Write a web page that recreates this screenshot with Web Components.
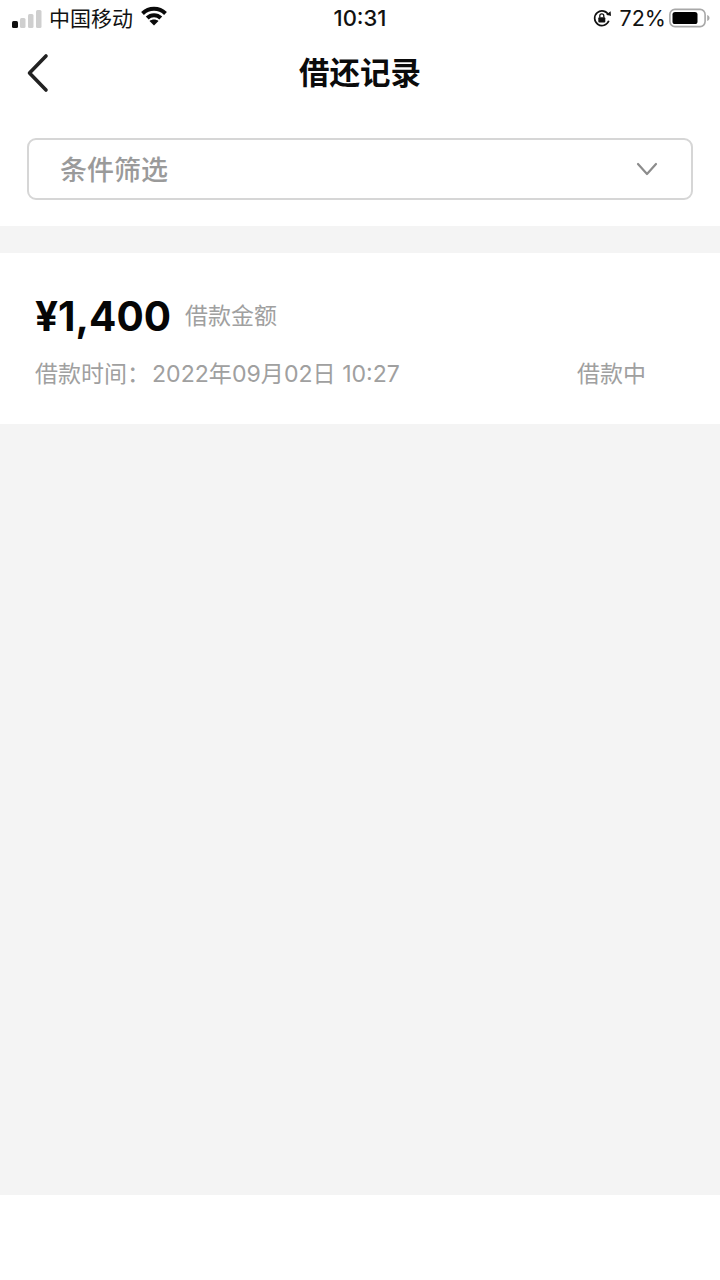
<!DOCTYPE html>
<html lang="zh">
<head>
<meta charset="utf-8">
<title>借还记录</title>
<style>
    html, body { margin: 0; padding: 0; background: #fff; }
    body { width: 720px; height: 1280px; overflow: hidden; font-family: Inter, "Noto Sans CJK SC", sans-serif; }
</style>
</head>
<body>
<record-page>
    <status-bar></status-bar>
    <nav-bar title="借还记录"></nav-bar>
    <filter-select label="条件筛选"></filter-select>
    <record-list>
        <loan-record amount="¥1,400" caption="借款金额" time="借款时间：" date="2022年09月02日 10:27" state="借款中"></loan-record>
    </record-list>
</record-page>
<script>
{
    class RecordPage extends HTMLElement {
        constructor() {
            super();
            this.attachShadow({ mode: "open" }).innerHTML = `
            <style>
                :host { display: block; height: 1280px; background: #fff; }
            </style>
            <slot></slot>
            `;
        }
    }

    class StatusBar extends HTMLElement {
        constructor() {
            super();
            this.attachShadow({ mode: "open" }).innerHTML = `
            <style>
                :host { display: grid; grid-template-columns: 1fr auto 1fr; align-items: center; height: 37px; font-size: 21px; color: #111; }
                #left, #right { display: flex; align-items: center; }
                #left { padding-left: 12px; }
                #right { justify-content: flex-end; padding-right: 10px; }
                #carrier { margin-left: 7px; margin-top: -3px; }
                #wifi { margin-left: 8px; margin-top: -5px; }
                #clock { font-size: 22px; font-weight: 500; margin-top: -1px; }
                #lock { margin-top: -1px; }
                #pct { margin: -2px 5px 0 8px; font-size: 21.500px; }
                #battery { margin-top: -1px; margin-left: -2px; }
                svg { display: block; }
            </style>
            <div id="left">
                <svg width="30" height="20" viewBox="0 0 30 20">
                    <rect x="0" y="12" width="6" height="7" rx="1.500" fill="#111"/>
                    <rect x="8" y="9" width="5.500" height="10" rx="1.500" fill="#cfcfcf"/>
                    <rect x="16" y="5" width="5.500" height="14" rx="1.500" fill="#cfcfcf"/>
                    <rect x="24" y="1" width="5.500" height="18" rx="1.500" fill="#cfcfcf"/>
                </svg>
                <span id="carrier">中国移动</span>
                <svg id="wifi" width="26" height="20" viewBox="0 0 26 20" fill="none" stroke="#0a0a0a" stroke-width="4">
                    <path d="M1.500 7.500C8 1.200 18 1.200 24.500 7.500"/>
                    <path d="M6.200 12C10 8.200 16 8.200 19.800 12"/>
                    <path d="M13 19.500L8.500 15C11 13 15 13 17.500 15Z" fill="#0a0a0a" stroke="none"/>
                </svg>
            </div>
            <span id="clock">10:31</span>
            <div id="right">
                <svg id="lock" width="20" height="20" viewBox="0 0 20 20" fill="none">
                    <path d="M16.600 7.200A7.300 7.300 0 1 0 16.800 12.800" stroke="#111" stroke-width="1.700"/>
                    <path d="M14.200 6.400L19 8L18.600 3.200Z" fill="#111"/>
                    <rect x="6.300" y="9.200" width="7" height="5.400" rx="1" fill="#111"/>
                    <path d="M7.800 9.500V7.800a2 2 0 0 1 4 0V9.500" stroke="#111" stroke-width="1.300"/>
                </svg>
                <span id="pct">72%</span>
                <svg id="battery" width="41" height="20" viewBox="0 0 41 20">
                    <rect x="0.900" y="1.400" width="35.200" height="17.200" rx="5" fill="none" stroke="#a8a8a8" stroke-width="1.600"/>
                    <rect x="3.500" y="4" width="25" height="12" rx="2.600" fill="#000"/>
                    <path d="M38.200 7v6c1.500-.6 2.300-1.800 2.300-3s-.8-2.400-2.300-3Z" fill="#a8a8a8"/>
                </svg>
            </div>
            `;
        }
    }

    class NavBar extends HTMLElement {
        constructor() {
            super();
            this.attachShadow({ mode: "open" }).innerHTML = `
            <style>
                :host { display: flex; justify-content: center; position: relative; height: 73px; }
                h1 { margin: 16px 0 0; font-size: 30.500px; line-height: 40px; font-weight: 700; color: #0b0b0b; }
                svg { position: absolute; left: 26px; top: 16px; }
            </style>
            <svg width="24" height="40" viewBox="0 0 24 40" fill="none" stroke="#222" stroke-width="3.600" stroke-linecap="round" stroke-linejoin="round">
                <path d="M20 3L3.500 20L20 37"/>
            </svg>
            <h1>${this.getAttribute("title")}</h1>
            `;
        }
    }

    class FilterSelect extends HTMLElement {
        constructor() {
            super();
            this.attachShadow({ mode: "open" }).innerHTML = `
            <style>
                :host { display: block; padding: 28px 27px 26px; }
                #box { display: flex; align-items: center; justify-content: space-between; height: 62px; box-sizing: border-box; padding: 0 33px 0 31px; border: 2px solid #d6d6d6; border-radius: 9px; }
                span { font-size: 27px; font-weight: 500; color: #9a9a9a; margin-top: -2px; }
                svg { display: block; }
            </style>
            <div id="box">
                <span>${this.getAttribute("label")}</span>
                <svg width="22" height="14" viewBox="0 0 22 14" fill="none" stroke="#8c8c8c" stroke-width="2.200" stroke-linecap="round" stroke-linejoin="round">
                    <path d="M2 2L11 12L20 2"/>
                </svg>
            </div>
            `;
        }
    }

    class RecordList extends HTMLElement {
        constructor() {
            super();
            this.attachShadow({ mode: "open" }).innerHTML = `
            <style>
                :host { display: block; height: 969px; box-sizing: border-box; padding-top: 27px; background: #f4f4f4; }
            </style>
            <slot></slot>
            `;
        }
    }

    class LoanRecord extends HTMLElement {
        constructor() {
            super();
            this.attachShadow({ mode: "open" }).innerHTML = `
            <style>
                :host { display: block; height: 171px; box-sizing: border-box; padding: 38px 35px 0; background: #fff; color: #a0a0a0; }
                #top { display: flex; align-items: center; height: 50px; }
                #amount { font-size: 40.500px; line-height: 50px; font-weight: 700; color: #060606; margin-top: 2px; }
                #caption { margin-left: 14px; font-size: 23px; line-height: 50px; }
                #bottom { display: flex; align-items: center; margin-top: 13px; height: 36px; font-size: 23px; }
                #date { margin-left: 2px; font-size: 23.100px; }
                #state { margin-left: auto; margin-right: 39px; }
            </style>
            <div id="top">
                <span id="amount">${this.getAttribute("amount")}</span>
                <span id="caption">${this.getAttribute("caption")}</span>
            </div>
            <div id="bottom">
                <span>${this.getAttribute("time")}</span>
                <span id="date">${this.getAttribute("date")}</span>
                <span id="state">${this.getAttribute("state")}</span>
            </div>
            `;
        }
    }

    customElements.define("record-page", RecordPage);
    customElements.define("status-bar", StatusBar);
    customElements.define("nav-bar", NavBar);
    customElements.define("filter-select", FilterSelect);
    customElements.define("record-list", RecordList);
    customElements.define("loan-record", LoanRecord);
}
</script>
</body>
</html>
